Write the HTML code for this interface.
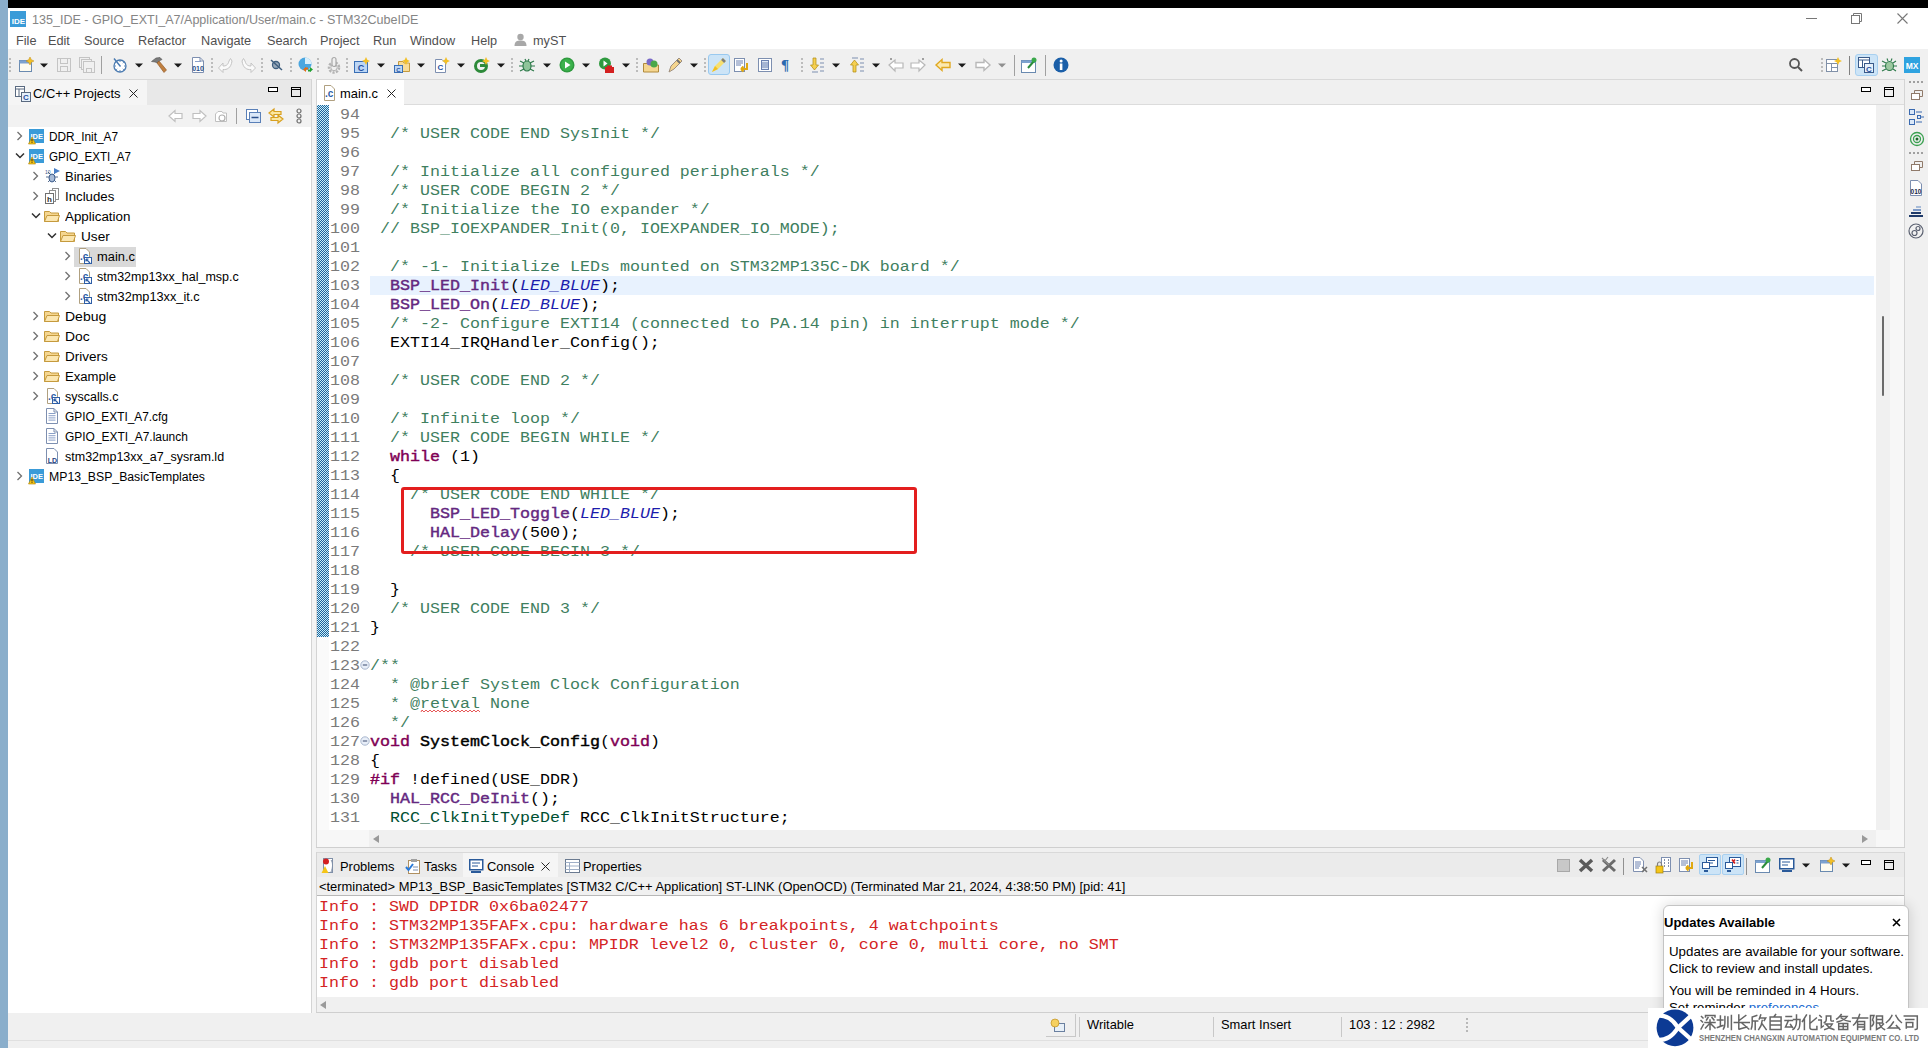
<!DOCTYPE html><html><head><meta charset="utf-8"><style>
*{margin:0;padding:0;box-sizing:border-box}
html,body{width:1928px;height:1048px;overflow:hidden;background:#f0f0f0;font-family:"Liberation Sans",sans-serif;font-size:12.7px;color:#000}
.a{position:absolute}
.t{position:absolute;white-space:pre;line-height:16px}
.ln{position:absolute;width:44px;text-align:right;font-family:"Liberation Mono",monospace;font-size:16.66px;line-height:19px;height:19px;color:#7a7a7a;white-space:pre;transform:scaleY(0.87);transform-origin:0 14px}
.cl{position:absolute;font-family:"Liberation Mono",monospace;font-size:16.66px;line-height:19px;height:19px;color:#000;white-space:pre;transform:scaleY(0.87);transform-origin:0 14px}
.cm{color:#3f7f5f}
.kw{color:#7f0055;-webkit-text-stroke:0.45px #7f0055}
.fn{color:#642880;-webkit-text-stroke:0.45px #642880}
.fb{-webkit-text-stroke:0.45px #000}
.en{color:#1c1cac;font-style:italic}
.ty{color:#005032}
.rd{color:#e01818}
svg{position:absolute;overflow:visible}
</style></head><body><div class="a" style="left:8px;top:0px;width:1920px;height:8px;background:#000"></div><div class="a" style="left:0px;top:0px;width:8px;height:1048px;background:#8aaecb"></div><div class="a" style="left:8px;top:8px;width:1920px;height:41px;background:#fff"></div><div class="a" style="left:8px;top:49px;width:1920px;height:31px;background:#f0f0f0"></div><svg style="left:10px;top:11px;" width="16" height="16" viewBox="0 0 16 16"><rect width="16" height="16" fill="#3a9bd8"/><text x="8.5" y="12.5" font-family="Liberation Sans" font-weight="bold" font-size="8" fill="#fff" text-anchor="middle">IDE</text></svg><div class="t" style="left:32px;top:12px;color:#858585;font-size:12.55px">135_IDE - GPIO_EXTI_A7/Application/User/main.c - STM32CubeIDE</div><div class="a" style="left:1806px;top:18px;width:11px;height:1px;background:#777"></div><svg style="left:1851px;top:13px;" width="12" height="12" viewBox="0 0 12 12"><rect x="0.5" y="2.5" width="8" height="8" fill="none" stroke="#777"/><path d="M2.5 2.5V0.5H10.5V8.5H8.5" fill="none" stroke="#777"/></svg><svg style="left:1897px;top:13px;" width="11" height="11" viewBox="0 0 11 11"><path d="M0.5 0.5L10.5 10.5M10.5 0.5L0.5 10.5" stroke="#777" stroke-width="1.1"/></svg><div class="t" style="left:16px;top:33px;color:#505050">File</div><div class="t" style="left:48px;top:33px;color:#505050">Edit</div><div class="t" style="left:84px;top:33px;color:#505050">Source</div><div class="t" style="left:138px;top:33px;color:#505050">Refactor</div><div class="t" style="left:201px;top:33px;color:#505050">Navigate</div><div class="t" style="left:267px;top:33px;color:#505050">Search</div><div class="t" style="left:320px;top:33px;color:#505050">Project</div><div class="t" style="left:373px;top:33px;color:#505050">Run</div><div class="t" style="left:410px;top:33px;color:#505050">Window</div><div class="t" style="left:471px;top:33px;color:#505050">Help</div><div class="t" style="left:533px;top:33px;color:#505050">myST</div><svg style="left:514px;top:33px;" width="13" height="13" viewBox="0 0 13 13"><circle cx="6.5" cy="4" r="3.2" fill="#a8a8a8"/><path d="M0.5 13C0.5 8.5 3 7.5 6.5 7.5S12.5 8.5 12.5 13Z" fill="#a8a8a8"/></svg><svg style="left:9px;top:58px;" width="2" height="16" viewBox="0 0 2 16"><rect x="0" y="0" width="2" height="2" fill="#bcbcbc"/><rect x="0" y="4" width="2" height="2" fill="#bcbcbc"/><rect x="0" y="8" width="2" height="2" fill="#bcbcbc"/><rect x="0" y="12" width="2" height="2" fill="#bcbcbc"/></svg><svg style="left:18px;top:57px;" width="16" height="16" viewBox="0 0 16 16"><rect x="1.5" y="3.5" width="12" height="11" fill="#fdfbf0" stroke="#6a8ab0"/><rect x="1.5" y="3.5" width="12" height="3" fill="#7da2cf"/><path d="M12 0L13.3 2.7L16 4L13.3 5.3L12 8L10.7 5.3L8 4L10.7 2.7Z" fill="#f2c027" stroke="#c08a10" stroke-width="0.5"/></svg><svg style="left:40px;top:63px;" width="8" height="5" viewBox="0 0 8 5"><path d="M0 0.5H8L4 4.5Z" fill="#1a1a1a"/></svg><svg style="left:56px;top:57px;" width="16" height="16" viewBox="0 0 16 16"><rect x="1.5" y="1.5" width="13" height="13" fill="none" stroke="#c4c4c4"/><rect x="4.5" y="1.5" width="7" height="5" fill="none" stroke="#c4c4c4"/><rect x="4.5" y="9.5" width="7" height="5" fill="none" stroke="#c4c4c4"/></svg><svg style="left:79px;top:57px;" width="16" height="16" viewBox="0 0 16 16"><rect x="0.5" y="0.5" width="10" height="10" fill="none" stroke="#c4c4c4"/><rect x="2.5" y="2.5" width="10" height="10" fill="#f0f0f0" stroke="#c4c4c4"/><rect x="4.5" y="4.5" width="11" height="11" fill="#f0f0f0" stroke="#c4c4c4"/><rect x="7.5" y="11.5" width="5" height="4" fill="none" stroke="#c4c4c4"/></svg><div class="a" style="left:101px;top:56px;width:1px;height:18px;background:#a0a0a0"></div><svg style="left:112px;top:57px;" width="16" height="16" viewBox="0 0 16 16"><circle cx="8" cy="9" r="6" fill="#fff" stroke="#4a7ab0" stroke-width="1.3"/><path d="M2 1.5L8.5 9.5" stroke="#4a7ab0" stroke-width="1.5"/><path d="M8 3.5v1.5M13.5 9h-1.5M8 14.5v-1.5M2.5 9h1.5M11.8 5.2l-1 1M11.8 12.8l-1-1M4.2 12.8l1-1" stroke="#4a7ab0" stroke-width="0.9"/></svg><svg style="left:135px;top:63px;" width="8" height="5" viewBox="0 0 8 5"><path d="M0 0.5H8L4 4.5Z" fill="#1a1a1a"/></svg><svg style="left:151px;top:57px;" width="16" height="16" viewBox="0 0 16 16"><path d="M0.5 4.5L5 1L9 0.5L11 2.5L8 4L6.5 6L4 5Z" fill="#7a7a7a" stroke="#505050" stroke-width="0.6"/><path d="M6 6L8 4L15.5 13L13 15.5Z" fill="#c08040" stroke="#8a5020" stroke-width="0.6"/></svg><svg style="left:174px;top:63px;" width="8" height="5" viewBox="0 0 8 5"><path d="M0 0.5H8L4 4.5Z" fill="#1a1a1a"/></svg><svg style="left:190px;top:57px;" width="16" height="16" viewBox="0 0 16 16"><path d="M2.5 0.5H10L13.5 4V15.5H2.5Z" fill="#fff" stroke="#7d8fb0"/><path d="M10 0.5V4H13.5" fill="none" stroke="#7d8fb0"/></svg><svg style="left:190px;top:57px;" width="16" height="16" viewBox="0 0 16 16"><text x="8" y="14" font-family="Liberation Sans" font-weight="bold" font-size="7" fill="#2a4f8a" text-anchor="middle">010</text><rect x="5" y="4" width="6" height="1" fill="#8aa0c8"/></svg><svg style="left:211px;top:58px;" width="2" height="16" viewBox="0 0 2 16"><rect x="0" y="0" width="2" height="2" fill="#bcbcbc"/><rect x="0" y="4" width="2" height="2" fill="#bcbcbc"/><rect x="0" y="8" width="2" height="2" fill="#bcbcbc"/><rect x="0" y="12" width="2" height="2" fill="#bcbcbc"/></svg><svg style="left:218px;top:57px;" width="16" height="16" viewBox="0 0 16 16"><path d="M5 6L0.5 11L5 15.5V12.5C9 13 13 11 14 4L12.5 1.5L11 4C10 8 8 9 5 9Z" fill="#fafafa" stroke="#c4c4c4" stroke-width="1"/></svg><svg style="left:240px;top:57px;" width="16" height="16" viewBox="0 0 16 16"><path d="M11 6L15.5 11L11 15.5V12.5C7 13 3 11 2 4L3.5 1.5L5 4C6 8 8 9 11 9Z" fill="#fafafa" stroke="#c4c4c4" stroke-width="1"/></svg><svg style="left:261px;top:58px;" width="2" height="16" viewBox="0 0 2 16"><rect x="0" y="0" width="2" height="2" fill="#bcbcbc"/><rect x="0" y="4" width="2" height="2" fill="#bcbcbc"/><rect x="0" y="8" width="2" height="2" fill="#bcbcbc"/><rect x="0" y="12" width="2" height="2" fill="#bcbcbc"/></svg><svg style="left:269px;top:57px;" width="16" height="16" viewBox="0 0 16 16"><circle cx="7" cy="8" r="3.5" fill="#9ab" stroke="#3f5f7f" stroke-width="1.3"/><path d="M2 3L13 13" stroke="#3f5f7f" stroke-width="1.5"/></svg><svg style="left:290px;top:58px;" width="2" height="16" viewBox="0 0 2 16"><rect x="0" y="0" width="2" height="2" fill="#bcbcbc"/><rect x="0" y="4" width="2" height="2" fill="#bcbcbc"/><rect x="0" y="8" width="2" height="2" fill="#bcbcbc"/><rect x="0" y="12" width="2" height="2" fill="#bcbcbc"/></svg><svg style="left:298px;top:57px;" width="16" height="16" viewBox="0 0 16 16"><circle cx="7" cy="7" r="6.5" fill="#4aa6e0"/><path d="M7 0.5A6.5 6.5 0 0 1 13.5 7L7 7Z" fill="#d8eefa"/><path d="M5 12.5L8 10V15Z" fill="#e86a10"/><path d="M7 11.5H10" stroke="#e86a10" stroke-width="2"/><path d="M15 12.5L12 10V15Z" fill="#20a030"/><path d="M10 13.5H13" stroke="#20a030" stroke-width="2"/></svg><svg style="left:317px;top:58px;" width="2" height="16" viewBox="0 0 2 16"><rect x="0" y="0" width="2" height="2" fill="#bcbcbc"/><rect x="0" y="4" width="2" height="2" fill="#bcbcbc"/><rect x="0" y="8" width="2" height="2" fill="#bcbcbc"/><rect x="0" y="12" width="2" height="2" fill="#bcbcbc"/></svg><svg style="left:326px;top:57px;" width="16" height="16" viewBox="0 0 16 16"><circle cx="8" cy="10.5" r="5" fill="none" stroke="#b4b4b4" stroke-width="2.5" stroke-dasharray="2.2 1.3"/><circle cx="8" cy="10.5" r="3.2" fill="#f0f0f0" stroke="#b4b4b4" stroke-width="1"/><rect x="6" y="0.5" width="4" height="9" rx="2" fill="#f0f0f0" stroke="#a8a8a8" stroke-width="1.2"/></svg><svg style="left:346px;top:58px;" width="2" height="16" viewBox="0 0 2 16"><rect x="0" y="0" width="2" height="2" fill="#bcbcbc"/><rect x="0" y="4" width="2" height="2" fill="#bcbcbc"/><rect x="0" y="8" width="2" height="2" fill="#bcbcbc"/><rect x="0" y="12" width="2" height="2" fill="#bcbcbc"/></svg><svg style="left:354px;top:57px;" width="16" height="16" viewBox="0 0 16 16"><rect x="0.5" y="4.5" width="13" height="11" fill="#bcd6f5" stroke="#3a6fb5"/><text x="7" y="14" font-family="Liberation Sans" font-weight="bold" font-size="9" fill="#1f4f9f" text-anchor="middle">C</text><path d="M12 0L13.3 2.7L16 4L13.3 5.3L12 8L10.7 5.3L8 4L10.7 2.7Z" fill="#f2c027"/></svg><svg style="left:377px;top:63px;" width="8" height="5" viewBox="0 0 8 5"><path d="M0 0.5H8L4 4.5Z" fill="#1a1a1a"/></svg><svg style="left:394px;top:57px;" width="16" height="16" viewBox="0 0 16 16"><path d="M4.5 4.5H9L10 6H15.5V14.5H4.5Z" fill="#f8dc98" stroke="#c59a3d"/><rect x="0.5" y="8.5" width="8" height="7" fill="#bcd6f5" stroke="#3a6fb5"/><text x="4.5" y="14.5" font-family="Liberation Sans" font-weight="bold" font-size="6" fill="#1f4f9f" text-anchor="middle">C</text><path d="M12 0L13.3 2.7L16 4L13.3 5.3L12 8L10.7 5.3L8 4L10.7 2.7Z" fill="#f2c027"/></svg><svg style="left:417px;top:63px;" width="8" height="5" viewBox="0 0 8 5"><path d="M0 0.5H8L4 4.5Z" fill="#1a1a1a"/></svg><svg style="left:434px;top:57px;" width="16" height="16" viewBox="0 0 16 16"><path d="M1.5 2.5H8L11.5 6V15.5H1.5Z" fill="#fff" stroke="#7d8fb0"/><text x="6.5" y="13" font-family="Liberation Sans" font-weight="bold" font-size="8" fill="#1f4f9f" text-anchor="middle">C</text><path d="M12 0L13.3 2.7L16 4L13.3 5.3L12 8L10.7 5.3L8 4L10.7 2.7Z" fill="#f2c027"/></svg><svg style="left:457px;top:63px;" width="8" height="5" viewBox="0 0 8 5"><path d="M0 0.5H8L4 4.5Z" fill="#1a1a1a"/></svg><svg style="left:474px;top:57px;" width="16" height="16" viewBox="0 0 16 16"><circle cx="7" cy="9" r="5.5" fill="none" stroke="#2d8a3a" stroke-width="3"/><rect x="6" y="7" width="5" height="3" fill="#2d8a3a"/><path d="M12 0L13.3 2.7L16 4L13.3 5.3L12 8L10.7 5.3L8 4L10.7 2.7Z" fill="#f2c027"/></svg><svg style="left:497px;top:63px;" width="8" height="5" viewBox="0 0 8 5"><path d="M0 0.5H8L4 4.5Z" fill="#1a1a1a"/></svg><svg style="left:511px;top:58px;" width="2" height="16" viewBox="0 0 2 16"><rect x="0" y="0" width="2" height="2" fill="#bcbcbc"/><rect x="0" y="4" width="2" height="2" fill="#bcbcbc"/><rect x="0" y="8" width="2" height="2" fill="#bcbcbc"/><rect x="0" y="12" width="2" height="2" fill="#bcbcbc"/></svg><svg style="left:519px;top:57px;" width="16" height="16" viewBox="0 0 16 16"><ellipse cx="8" cy="9" rx="4" ry="5" fill="#8fc49a" stroke="#2d7a4a" stroke-width="1.2"/><path d="M1 4L5 6M15 4L11 6M0 9H4M16 9H12M1 14L5 12M15 14L11 12M6 2L7 4M10 2L9 4" stroke="#2d7a4a" stroke-width="1.2"/></svg><svg style="left:543px;top:63px;" width="8" height="5" viewBox="0 0 8 5"><path d="M0 0.5H8L4 4.5Z" fill="#1a1a1a"/></svg><svg style="left:559px;top:57px;" width="16" height="16" viewBox="0 0 16 16"><circle cx="8" cy="8" r="7.5" fill="#2f9a3f"/><circle cx="8" cy="8" r="6" fill="#3cb24c"/><path d="M6 4.5L11.5 8L6 11.5Z" fill="#fff"/></svg><svg style="left:582px;top:63px;" width="8" height="5" viewBox="0 0 8 5"><path d="M0 0.5H8L4 4.5Z" fill="#1a1a1a"/></svg><svg style="left:598px;top:57px;" width="16" height="16" viewBox="0 0 16 16"><circle cx="7" cy="6.5" r="6" fill="#2f9a3f"/><path d="M5.5 3.5L9.5 6.5L5.5 9.5Z" fill="#fff"/><rect x="7" y="10" width="9" height="6" fill="#d42020"/><rect x="9" y="8.5" width="5" height="2" fill="#d42020"/></svg><svg style="left:622px;top:63px;" width="8" height="5" viewBox="0 0 8 5"><path d="M0 0.5H8L4 4.5Z" fill="#1a1a1a"/></svg><svg style="left:636px;top:58px;" width="2" height="16" viewBox="0 0 2 16"><rect x="0" y="0" width="2" height="2" fill="#bcbcbc"/><rect x="0" y="4" width="2" height="2" fill="#bcbcbc"/><rect x="0" y="8" width="2" height="2" fill="#bcbcbc"/><rect x="0" y="12" width="2" height="2" fill="#bcbcbc"/></svg><svg style="left:643px;top:57px;" width="16" height="16" viewBox="0 0 16 16"><path d="M0.5 6.5H6L7 8H15.5V15H0.5Z" fill="#f5d690" stroke="#b08a3d"/><circle cx="7" cy="5" r="3.5" fill="#7a6ac8"/><circle cx="11" cy="7" r="3.5" fill="#4aa84a"/></svg><svg style="left:667px;top:57px;" width="16" height="16" viewBox="0 0 16 16"><path d="M2 15L4 9L12 1L15 4L7 12Z" fill="#f5d690" stroke="#a09080"/><path d="M10 3L13 6" stroke="#707070" stroke-width="2"/></svg><svg style="left:690px;top:63px;" width="8" height="5" viewBox="0 0 8 5"><path d="M0 0.5H8L4 4.5Z" fill="#1a1a1a"/></svg><svg style="left:704px;top:58px;" width="2" height="16" viewBox="0 0 2 16"><rect x="0" y="0" width="2" height="2" fill="#bcbcbc"/><rect x="0" y="4" width="2" height="2" fill="#bcbcbc"/><rect x="0" y="8" width="2" height="2" fill="#bcbcbc"/><rect x="0" y="12" width="2" height="2" fill="#bcbcbc"/></svg><div class="a" style="left:708px;top:54px;width:22px;height:21px;background:#cce4f7;border:1px solid #99c9ef;border-radius:3px"></div><svg style="left:711px;top:57px;" width="16" height="16" viewBox="0 0 16 16"><path d="M1 15L4 9L12 1L15 4L7 12Z" fill="#f7e070"/><path d="M4 9L7 12L1 15Z" fill="#f2c020"/><path d="M11 2L14 5" stroke="#808080" stroke-width="2.5"/></svg><svg style="left:734px;top:57px;" width="16" height="16" viewBox="0 0 16 16"><rect x="0.5" y="1.5" width="10" height="13" fill="#fff" stroke="#7d8fb0"/><path d="M2 4h7M2 6h7M2 8h5" stroke="#6a80b0"/><path d="M13 6V12H7M7 12L9.5 9.5M7 12L9.5 14.5" stroke="#e0a810" stroke-width="2" fill="none"/></svg><svg style="left:757px;top:57px;" width="16" height="16" viewBox="0 0 16 16"><rect x="1.5" y="1.5" width="13" height="13" fill="#fff" stroke="#7d8fb0"/><rect x="4.5" y="3.5" width="7" height="9" fill="#dfe8f5" stroke="#6a80b0"/><path d="M5 6h6M5 8h6M5 10h6" stroke="#6a80b0"/></svg><div class="t" style="left:781px;top:57px;font-family:Liberation Serif;font-weight:bold;font-size:15px;color:#2a6ab0;line-height:16px">¶</div><svg style="left:801px;top:58px;" width="2" height="16" viewBox="0 0 2 16"><rect x="0" y="0" width="2" height="2" fill="#bcbcbc"/><rect x="0" y="4" width="2" height="2" fill="#bcbcbc"/><rect x="0" y="8" width="2" height="2" fill="#bcbcbc"/><rect x="0" y="12" width="2" height="2" fill="#bcbcbc"/></svg><svg style="left:809px;top:57px;" width="16" height="16" viewBox="0 0 16 16"><path d="M4 1V8H1.5L5.5 13L9.5 8H7V1Z" fill="#f5cf50" stroke="#b08a10" stroke-width="0.7"/><path d="M11 2h4M11 6h4M11 10h4M11 14h4M3 15h6" stroke="#7d8fb0"/></svg><svg style="left:832px;top:63px;" width="8" height="5" viewBox="0 0 8 5"><path d="M0 0.5H8L4 4.5Z" fill="#1a1a1a"/></svg><svg style="left:849px;top:57px;" width="16" height="16" viewBox="0 0 16 16"><path d="M4 15V8H1.5L5.5 3L9.5 8H7V15Z" fill="#f5cf50" stroke="#b08a10" stroke-width="0.7"/><path d="M11 2h4M11 6h4M11 10h4M11 14h4M3 1h6" stroke="#7d8fb0"/></svg><svg style="left:872px;top:63px;" width="8" height="5" viewBox="0 0 8 5"><path d="M0 0.5H8L4 4.5Z" fill="#1a1a1a"/></svg><svg style="left:888px;top:57px;" width="16" height="16" viewBox="0 0 16 16"><path d="M1 8L7 3V6H15V11H7V14Z" fill="#fff" stroke="#b8b8b8" stroke-width="1.2"/><path d="M2 1L4 3M4 1L2 3" stroke="#a0a0a0"/></svg><svg style="left:910px;top:57px;" width="16" height="16" viewBox="0 0 16 16"><path d="M15 8L9 3V6H1V11H9V14Z" fill="#fff" stroke="#b8b8b8" stroke-width="1.2"/><path d="M12 1L14 3M14 1L12 3" stroke="#a0a0a0"/></svg><svg style="left:935px;top:57px;" width="16" height="16" viewBox="0 0 16 16"><path d="M1 8L7 2.5V5.5H15V10.5H7V13.5Z" fill="#fbe9b0" stroke="#e0a820" stroke-width="1.4"/></svg><svg style="left:958px;top:63px;" width="8" height="5" viewBox="0 0 8 5"><path d="M0 0.5H8L4 4.5Z" fill="#1a1a1a"/></svg><svg style="left:975px;top:57px;" width="16" height="16" viewBox="0 0 16 16"><path d="M15 8L9 2.5V5.5H1V10.5H9V13.5Z" fill="#fff" stroke="#b8b8b8" stroke-width="1.4"/></svg><svg style="left:998px;top:63px;" width="8" height="5" viewBox="0 0 8 5"><path d="M0 0.5H8L4 4.5Z" fill="#909090"/></svg><div class="a" style="left:1014px;top:55px;width:1px;height:21px;background:#a0a0a0"></div><svg style="left:1021px;top:57px;" width="16" height="16" viewBox="0 0 16 16"><rect x="0.5" y="3.5" width="14" height="12" fill="#fff" stroke="#6a8ab0"/><rect x="0.5" y="3.5" width="14" height="2.5" fill="#7da2cf"/><path d="M7 11L13 4" stroke="#2a8a3a" stroke-width="2"/><circle cx="13" cy="3" r="2.5" fill="#3aa84a"/></svg><div class="a" style="left:1045px;top:55px;width:1px;height:21px;background:#a0a0a0"></div><svg style="left:1053px;top:57px;" width="16" height="16" viewBox="0 0 16 16"><circle cx="8" cy="8" r="7.5" fill="#1b5fa8"/><rect x="6.8" y="6.5" width="2.6" height="6.5" fill="#fff"/><circle cx="8.1" cy="4" r="1.5" fill="#fff"/></svg><svg style="left:1789px;top:58px;" width="14" height="14" viewBox="0 0 14 14"><circle cx="5.5" cy="5.5" r="4.5" fill="none" stroke="#555" stroke-width="1.8"/><path d="M9 9L13 13" stroke="#555" stroke-width="2"/></svg><svg style="left:1821px;top:58px;" width="2" height="16" viewBox="0 0 2 16"><rect x="0" y="0" width="2" height="2" fill="#bcbcbc"/><rect x="0" y="4" width="2" height="2" fill="#bcbcbc"/><rect x="0" y="8" width="2" height="2" fill="#bcbcbc"/><rect x="0" y="12" width="2" height="2" fill="#bcbcbc"/></svg><svg style="left:1826px;top:57px;" width="16" height="16" viewBox="0 0 16 16"><rect x="0.5" y="2.5" width="11" height="12" fill="#fff" stroke="#8090a8"/><path d="M0.5 6.5H11.5M5.5 6.5V14.5M5.5 10.5H11.5" stroke="#8090a8"/><path d="M12 0L13.3 2.7L16 4L13.3 5.3L12 8L10.7 5.3L8 4L10.7 2.7Z" fill="#f2c027"/></svg><div class="a" style="left:1849px;top:56px;width:1px;height:19px;background:#808080"></div><div class="a" style="left:1855px;top:54px;width:23px;height:22px;background:#cce4f7;border:1px solid #a8d0f0;border-radius:3px"></div><svg style="left:1858px;top:57px;" width="16" height="16" viewBox="0 0 16 16"><rect x="0.5" y="0.5" width="11" height="10" fill="#fff" stroke="#3a5a8a"/><path d="M0.5 3H11.5M4.5 3V10.5" stroke="#3a5a8a"/><rect x="6.5" y="6.5" width="9" height="9" fill="#e6f0fa" stroke="#3a5a8a"/><text x="11" y="14.5" font-family="Liberation Sans" font-weight="bold" font-size="8" fill="#1f4f9f" text-anchor="middle">C</text></svg><svg style="left:1881px;top:57px;" width="16" height="16" viewBox="0 0 16 16"><ellipse cx="8.5" cy="9" rx="4" ry="4.5" fill="#9cc8a0" stroke="#2d7a4a" stroke-width="1.1"/><path d="M1 4L5 6M15 4L12 6M1 9H4.5M16 9H12.5M1 14L5 12M15 14L12 12M6 1.5L7 4M11 1.5L10 4" stroke="#2d7a4a" stroke-width="1.1"/></svg><svg style="left:1904px;top:57px;" width="16" height="16" viewBox="0 0 16 16"><rect width="16" height="16" fill="#2fa3e0"/><text x="8" y="12" font-family="Liberation Sans" font-weight="bold" font-size="8.5" fill="#fff" text-anchor="middle">MX</text></svg><div class="a" style="left:8px;top:79px;width:304px;height:935px;background:#fff"></div><div class="a" style="left:8px;top:79px;width:304px;height:1px;background:#d9d9d9"></div><div class="a" style="left:311px;top:79px;width:1px;height:935px;background:#d4d4d4"></div><div class="a" style="left:312px;top:79px;width:4px;height:935px;background:#f3f3f3"></div><div class="a" style="left:8px;top:1013px;width:304px;height:1px;background:#c8c8c8"></div><div class="a" style="left:8px;top:80px;width:303px;height:25px;background:#e8e8e8"></div><div class="a" style="left:8px;top:80px;width:139px;height:25px;background:#f5f5f5"></div><svg style="left:15px;top:86px;" width="16" height="16" viewBox="0 0 16 16"><rect x="0.5" y="0.5" width="9" height="10" fill="#fff" stroke="#5a6a80"/><path d="M0.5 3H9.5M4 3V10.5" stroke="#5a6a80"/><rect x="6.5" y="6.5" width="9" height="9" fill="#e6f0fa" stroke="#5a6a80"/><text x="11" y="14.3" font-family="Liberation Sans" font-weight="bold" font-size="8" fill="#1f4f9f" text-anchor="middle">C</text></svg><div class="t" style="left:33px;top:86px;font-size:12.9px">C/C++ Projects</div><svg style="left:129px;top:89px;" width="9" height="9" viewBox="0 0 9 9"><path d="M0.5 0.5L8.5 8.5M8.5 0.5L0.5 8.5" stroke="#1a1a1a" stroke-width="0.95"/></svg><div class="a" style="left:268px;top:87px;width:10px;height:5px;border:1.3px solid #000;background:#fff"></div><div class="a" style="left:291px;top:87px;width:10px;height:10px;border:1.3px solid #000"></div><div class="a" style="left:291px;top:89px;width:10px;height:1px;background:#000"></div><div class="a" style="left:8px;top:105px;width:303px;height:22px;background:#f2f2f2"></div><svg style="left:168px;top:109px;" width="16" height="14" viewBox="0 0 16 14"><path d="M1 7L7 1.5V4.5H14V9.5H7V12.5Z" fill="#fff" stroke="#c0c0c0" stroke-width="1.2"/></svg><svg style="left:191px;top:109px;" width="16" height="14" viewBox="0 0 16 14"><path d="M15 7L9 1.5V4.5H2V9.5H9V12.5Z" fill="#fff" stroke="#c0c0c0" stroke-width="1.2"/></svg><svg style="left:214px;top:109px;" width="14" height="14" viewBox="0 0 14 14"><path d="M1.5 12.5V5L4 2.5H8L9 4H12.5V12.5Z" fill="#fff" stroke="#c0c0c0"/><circle cx="8" cy="9" r="3" fill="none" stroke="#b0b0b0" stroke-width="1.2"/></svg><div class="a" style="left:236px;top:108px;width:1px;height:16px;background:#a0a0a0"></div><svg style="left:246px;top:109px;" width="16" height="14" viewBox="0 0 16 14"><rect x="0.5" y="0.5" width="11" height="10" fill="#fff" stroke="#5a80b8"/><rect x="3.5" y="3.5" width="11" height="10" fill="#dbe8f8" stroke="#5a80b8"/><path d="M5.5 8.5H12.5" stroke="#2a4f8a" stroke-width="1.5"/></svg><svg style="left:268px;top:108px;" width="16" height="16" viewBox="0 0 16 16"><path d="M1 5L6 1V3.5H13V6.5H6V9Z" fill="#fbe6a0" stroke="#d8a020" stroke-width="1.2"/><path d="M15 11L10 7V9.5H3V12.5H10V15Z" fill="#fbe6a0" stroke="#d8a020" stroke-width="1.2"/></svg><svg style="left:295px;top:108px;" width="8" height="16" viewBox="0 0 8 16"><circle cx="4" cy="3" r="2" fill="none" stroke="#707070" stroke-width="1.2"/><circle cx="4" cy="8" r="2" fill="none" stroke="#707070" stroke-width="1.2"/><circle cx="4" cy="13" r="2" fill="none" stroke="#707070" stroke-width="1.2"/></svg><svg style="left:16px;top:131px;" width="8" height="10" viewBox="0 0 8 10"><path d="M1.5 1L5.5 5L1.5 9" fill="none" stroke="#707070" stroke-width="1.3"/></svg><svg style="left:28px;top:128px;" width="16" height="16" viewBox="0 0 16 16"><rect x="1" y="1" width="15" height="14" fill="#3a9bd8"/><text x="8.8" y="11" font-family="Liberation Sans" font-weight="bold" font-size="7.5" fill="#fff" text-anchor="middle">IDE</text><path d="M4 9L7.5 16H0.5Z" fill="#f5c518" stroke="#b08000" stroke-width="0.6"/><rect x="3.6" y="11" width="0.8" height="2.5" fill="#000"/><rect x="3.6" y="14" width="0.8" height="0.8" fill="#000"/></svg><div class="t" style="left:49px;top:129px;font-size:12.5px;transform:scaleX(0.946);transform-origin:0 0">DDR_Init_A7</div><svg style="left:15px;top:152px;" width="10" height="8" viewBox="0 0 10 8"><path d="M1 1.5L5 5.5L9 1.5" fill="none" stroke="#303030" stroke-width="1.5"/></svg><svg style="left:28px;top:148px;" width="16" height="16" viewBox="0 0 16 16"><rect x="1" y="1" width="15" height="14" fill="#3a9bd8"/><text x="8.8" y="11" font-family="Liberation Sans" font-weight="bold" font-size="7.5" fill="#fff" text-anchor="middle">IDE</text><path d="M4 9L7.5 16H0.5Z" fill="#f5c518" stroke="#b08000" stroke-width="0.6"/><rect x="3.6" y="11" width="0.8" height="2.5" fill="#000"/><rect x="3.6" y="14" width="0.8" height="0.8" fill="#000"/></svg><div class="t" style="left:49px;top:149px;font-size:12.5px;transform:scaleX(0.928);transform-origin:0 0">GPIO_EXTI_A7</div><svg style="left:32px;top:171px;" width="8" height="10" viewBox="0 0 8 10"><path d="M1.5 1L5.5 5L1.5 9" fill="none" stroke="#707070" stroke-width="1.3"/></svg><svg style="left:44px;top:168px;" width="16" height="16" viewBox="0 0 16 16"><path d="M4 4L7 7M12 4L9 7M2 9H5M11 9H14M4 14L6 12M12 14L10 12" stroke="#5a7090"/><ellipse cx="8" cy="10" rx="3" ry="4" fill="#a8bcd8" stroke="#3a5a8a"/><path d="M10 0L16 3L10 6Z" fill="#4a80c8"/><text x="1" y="6" font-size="5" fill="#3a5a8a" font-family="Liberation Sans">10</text></svg><div class="t" style="left:65px;top:169px;font-size:12.5px;transform:scaleX(1.04);transform-origin:0 0">Binaries</div><svg style="left:32px;top:191px;" width="8" height="10" viewBox="0 0 8 10"><path d="M1.5 1L5.5 5L1.5 9" fill="none" stroke="#707070" stroke-width="1.3"/></svg><svg style="left:44px;top:188px;" width="16" height="16" viewBox="0 0 16 16"><rect x="8.5" y="0.5" width="6" height="11" fill="#fff" stroke="#909090"/><rect x="5.5" y="2.5" width="6" height="11" fill="#fff" stroke="#909090"/><rect x="1.5" y="5.5" width="8" height="10" fill="#fff" stroke="#707070"/><text x="5.5" y="14" font-family="Liberation Sans" font-weight="bold" font-size="8" fill="#303030" text-anchor="middle">h</text></svg><div class="t" style="left:65px;top:189px;font-size:12.5px;transform:scaleX(1.06);transform-origin:0 0">Includes</div><svg style="left:31px;top:212px;" width="10" height="8" viewBox="0 0 10 8"><path d="M1 1.5L5 5.5L9 1.5" fill="none" stroke="#303030" stroke-width="1.5"/></svg><svg style="left:44px;top:208px;" width="16" height="16" viewBox="0 0 16 16"><path d="M0.5 3.5H5.5L7 5H14.5V13.5H0.5Z" fill="#f5d690" stroke="#c59a3d"/><path d="M0.5 13.5L3 7.5H15.5L13.5 13.5Z" fill="#fbe6b0" stroke="#c59a3d"/></svg><div class="t" style="left:65px;top:209px;font-size:12.5px;transform:scaleX(1.07);transform-origin:0 0">Application</div><svg style="left:47px;top:232px;" width="10" height="8" viewBox="0 0 10 8"><path d="M1 1.5L5 5.5L9 1.5" fill="none" stroke="#303030" stroke-width="1.5"/></svg><svg style="left:60px;top:228px;" width="16" height="16" viewBox="0 0 16 16"><path d="M0.5 3.5H5.5L7 5H14.5V13.5H0.5Z" fill="#f5d690" stroke="#c59a3d"/><path d="M0.5 13.5L3 7.5H15.5L13.5 13.5Z" fill="#fbe6b0" stroke="#c59a3d"/></svg><div class="t" style="left:81px;top:229px;font-size:12.5px;transform:scaleX(1.09);transform-origin:0 0">User</div><div class="a" style="left:74px;top:247px;width:62px;height:20px;background:#d9d9d9"></div><svg style="left:64px;top:251px;" width="8" height="10" viewBox="0 0 8 10"><path d="M1.5 1L5.5 5L1.5 9" fill="none" stroke="#707070" stroke-width="1.3"/></svg><svg style="left:76px;top:248px;" width="16" height="16" viewBox="0 0 16 16"><path d="M3.5 0.5H10L13.5 4V15.5H3.5Z" fill="#fff" stroke="#b0a080"/><text x="4" y="12" font-family="Liberation Sans" font-weight="bold" font-size="10" fill="#2f5fa7">.c</text><rect x="8.5" y="9.5" width="7" height="6" fill="#fff" stroke="#2f5fa7"/><path d="M10 11L14 15M10 11V13.5M10 11H12.5" stroke="#2f5fa7" stroke-width="1.2"/></svg><div class="t" style="left:97px;top:249px;font-size:12.5px;transform:scaleX(1.03);transform-origin:0 0">main.c</div><svg style="left:64px;top:271px;" width="8" height="10" viewBox="0 0 8 10"><path d="M1.5 1L5.5 5L1.5 9" fill="none" stroke="#707070" stroke-width="1.3"/></svg><svg style="left:76px;top:268px;" width="16" height="16" viewBox="0 0 16 16"><path d="M3.5 0.5H10L13.5 4V15.5H3.5Z" fill="#fff" stroke="#b0a080"/><text x="4" y="12" font-family="Liberation Sans" font-weight="bold" font-size="10" fill="#2f5fa7">.c</text><rect x="8.5" y="9.5" width="7" height="6" fill="#fff" stroke="#2f5fa7"/><path d="M10 11L14 15M10 11V13.5M10 11H12.5" stroke="#2f5fa7" stroke-width="1.2"/></svg><div class="t" style="left:97px;top:269px;font-size:12.5px;transform:scaleX(1.0);transform-origin:0 0">stm32mp13xx_hal_msp.c</div><svg style="left:64px;top:291px;" width="8" height="10" viewBox="0 0 8 10"><path d="M1.5 1L5.5 5L1.5 9" fill="none" stroke="#707070" stroke-width="1.3"/></svg><svg style="left:76px;top:288px;" width="16" height="16" viewBox="0 0 16 16"><path d="M3.5 0.5H10L13.5 4V15.5H3.5Z" fill="#fff" stroke="#b0a080"/><text x="4" y="12" font-family="Liberation Sans" font-weight="bold" font-size="10" fill="#2f5fa7">.c</text><rect x="8.5" y="9.5" width="7" height="6" fill="#fff" stroke="#2f5fa7"/><path d="M10 11L14 15M10 11V13.5M10 11H12.5" stroke="#2f5fa7" stroke-width="1.2"/></svg><div class="t" style="left:97px;top:289px;font-size:12.5px;transform:scaleX(1.02);transform-origin:0 0">stm32mp13xx_it.c</div><svg style="left:32px;top:311px;" width="8" height="10" viewBox="0 0 8 10"><path d="M1.5 1L5.5 5L1.5 9" fill="none" stroke="#707070" stroke-width="1.3"/></svg><svg style="left:44px;top:308px;" width="16" height="16" viewBox="0 0 16 16"><path d="M0.5 3.5H5.5L7 5H14.5V13.5H0.5Z" fill="#f5d690" stroke="#c59a3d"/><path d="M0.5 13.5L3 7.5H15.5L13.5 13.5Z" fill="#fbe6b0" stroke="#c59a3d"/></svg><div class="t" style="left:65px;top:309px;font-size:12.5px;transform:scaleX(1.12);transform-origin:0 0">Debug</div><svg style="left:32px;top:331px;" width="8" height="10" viewBox="0 0 8 10"><path d="M1.5 1L5.5 5L1.5 9" fill="none" stroke="#707070" stroke-width="1.3"/></svg><svg style="left:44px;top:328px;" width="16" height="16" viewBox="0 0 16 16"><path d="M0.5 3.5H5.5L7 5H14.5V13.5H0.5Z" fill="#f5d690" stroke="#c59a3d"/><path d="M0.5 13.5L3 7.5H15.5L13.5 13.5Z" fill="#fbe6b0" stroke="#c59a3d"/></svg><div class="t" style="left:65px;top:329px;font-size:12.5px;transform:scaleX(1.11);transform-origin:0 0">Doc</div><svg style="left:32px;top:351px;" width="8" height="10" viewBox="0 0 8 10"><path d="M1.5 1L5.5 5L1.5 9" fill="none" stroke="#707070" stroke-width="1.3"/></svg><svg style="left:44px;top:348px;" width="16" height="16" viewBox="0 0 16 16"><path d="M0.5 3.5H5.5L7 5H14.5V13.5H0.5Z" fill="#f5d690" stroke="#c59a3d"/><path d="M0.5 13.5L3 7.5H15.5L13.5 13.5Z" fill="#fbe6b0" stroke="#c59a3d"/></svg><div class="t" style="left:65px;top:349px;font-size:12.5px;transform:scaleX(1.08);transform-origin:0 0">Drivers</div><svg style="left:32px;top:371px;" width="8" height="10" viewBox="0 0 8 10"><path d="M1.5 1L5.5 5L1.5 9" fill="none" stroke="#707070" stroke-width="1.3"/></svg><svg style="left:44px;top:368px;" width="16" height="16" viewBox="0 0 16 16"><path d="M0.5 3.5H5.5L7 5H14.5V13.5H0.5Z" fill="#f5d690" stroke="#c59a3d"/><path d="M0.5 13.5L3 7.5H15.5L13.5 13.5Z" fill="#fbe6b0" stroke="#c59a3d"/></svg><div class="t" style="left:65px;top:369px;font-size:12.5px;transform:scaleX(1.05);transform-origin:0 0">Example</div><svg style="left:32px;top:391px;" width="8" height="10" viewBox="0 0 8 10"><path d="M1.5 1L5.5 5L1.5 9" fill="none" stroke="#707070" stroke-width="1.3"/></svg><svg style="left:44px;top:388px;" width="16" height="16" viewBox="0 0 16 16"><path d="M3.5 0.5H10L13.5 4V15.5H3.5Z" fill="#fff" stroke="#b0a080"/><text x="4" y="12" font-family="Liberation Sans" font-weight="bold" font-size="10" fill="#2f5fa7">.c</text><rect x="8.5" y="9.5" width="7" height="6" fill="#fff" stroke="#2f5fa7"/><path d="M10 11L14 15M10 11V13.5M10 11H12.5" stroke="#2f5fa7" stroke-width="1.2"/></svg><div class="t" style="left:65px;top:389px;font-size:12.5px;transform:scaleX(1.0);transform-origin:0 0">syscalls.c</div><svg style="left:44px;top:408px;" width="16" height="16" viewBox="0 0 16 16"><path d="M2.5 0.5H10L13.5 4V15.5H2.5Z" fill="#fff" stroke="#7d8fb0"/><path d="M10 0.5V4H13.5" fill="none" stroke="#7d8fb0"/><rect x="4.5" y="5.0" width="7" height="1" fill="#8aa0c8"/><rect x="4.5" y="7.2" width="7" height="1" fill="#8aa0c8"/><rect x="4.5" y="9.4" width="7" height="1" fill="#8aa0c8"/><rect x="4.5" y="11.6" width="7" height="1" fill="#8aa0c8"/></svg><div class="t" style="left:65px;top:409px;font-size:12.5px;transform:scaleX(0.95);transform-origin:0 0">GPIO_EXTI_A7.cfg</div><svg style="left:44px;top:428px;" width="16" height="16" viewBox="0 0 16 16"><path d="M2.5 0.5H10L13.5 4V15.5H2.5Z" fill="#fff" stroke="#7d8fb0"/><path d="M10 0.5V4H13.5" fill="none" stroke="#7d8fb0"/><rect x="4.5" y="5.0" width="7" height="1" fill="#8aa0c8"/><rect x="4.5" y="7.2" width="7" height="1" fill="#8aa0c8"/><rect x="4.5" y="9.4" width="7" height="1" fill="#8aa0c8"/><rect x="4.5" y="11.6" width="7" height="1" fill="#8aa0c8"/></svg><div class="t" style="left:65px;top:429px;font-size:12.5px;transform:scaleX(0.956);transform-origin:0 0">GPIO_EXTI_A7.launch</div><svg style="left:44px;top:448px;" width="16" height="16" viewBox="0 0 16 16"><path d="M2.5 0.5H10L13.5 4V15.5H2.5Z" fill="#fff" stroke="#7d8fb0"/><text x="8.5" y="14.5" font-family="Liberation Sans" font-weight="bold" font-size="7" fill="#1f3f7f" text-anchor="middle">LD</text></svg><div class="t" style="left:65px;top:449px;font-size:12.5px;transform:scaleX(1.0);transform-origin:0 0">stm32mp13xx_a7_sysram.ld</div><svg style="left:16px;top:471px;" width="8" height="10" viewBox="0 0 8 10"><path d="M1.5 1L5.5 5L1.5 9" fill="none" stroke="#707070" stroke-width="1.3"/></svg><svg style="left:28px;top:468px;" width="16" height="16" viewBox="0 0 16 16"><rect x="1" y="1" width="15" height="14" fill="#3a9bd8"/><text x="8.8" y="11" font-family="Liberation Sans" font-weight="bold" font-size="7.5" fill="#fff" text-anchor="middle">IDE</text><path d="M4 9L7.5 16H0.5Z" fill="#f5c518" stroke="#b08000" stroke-width="0.6"/><rect x="3.6" y="11" width="0.8" height="2.5" fill="#000"/><rect x="3.6" y="14" width="0.8" height="0.8" fill="#000"/></svg><div class="t" style="left:49px;top:469px;font-size:12.5px;transform:scaleX(0.98);transform-origin:0 0">MP13_BSP_BasicTemplates</div><div class="a" style="left:316px;top:79px;width:1589px;height:769px;background:#fff"></div><div class="a" style="left:316px;top:79px;width:1589px;height:1px;background:#d9d9d9"></div><div class="a" style="left:316px;top:79px;width:1px;height:769px;background:#d4d4d4"></div><div class="a" style="left:1904px;top:79px;width:1px;height:769px;background:#d4d4d4"></div><div class="a" style="left:316px;top:847px;width:1589px;height:1px;background:#cfcfcf"></div><div class="a" style="left:317px;top:80px;width:1587px;height:25px;background:#f0f0f0"></div><div class="a" style="left:317px;top:104px;width:1587px;height:1px;background:#dcdcdc"></div><div class="a" style="left:317px;top:80px;width:87px;height:25px;background:#fff"></div><svg style="left:321px;top:85px;" width="16" height="16" viewBox="0 0 16 16"><path d="M3.5 0.5H10L13.5 4V15.5H3.5Z" fill="#fff" stroke="#b0a080"/><text x="4" y="12" font-family="Liberation Sans" font-weight="bold" font-size="10" fill="#2f5fa7">.c</text></svg><div class="t" style="left:340px;top:86px;font-size:12.9px">main.c</div><svg style="left:387px;top:89px;" width="9" height="9" viewBox="0 0 9 9"><path d="M0.5 0.5L8.5 8.5M8.5 0.5L0.5 8.5" stroke="#1a1a1a" stroke-width="0.95"/></svg><div class="a" style="left:1861px;top:87px;width:10px;height:5px;border:1.3px solid #000;background:#fff"></div><div class="a" style="left:1884px;top:87px;width:10px;height:10px;border:1.3px solid #000"></div><div class="a" style="left:1884px;top:89px;width:10px;height:1px;background:#000"></div><svg style="left:317px;top:105px" width="12" height="532"><defs><pattern id="hp" width="2" height="2" patternUnits="userSpaceOnUse"><rect width="2" height="2" fill="#22609a"/><rect width="1" height="1" fill="#c6f2fc"/><rect x="1" y="1" width="1" height="1" fill="#c6f2fc"/></pattern></defs><rect width="12" height="532" fill="url(#hp)"/></svg><div class="a" style="left:317px;top:637px;width:12px;height:193px;background:#fafafa"></div><div class="a" style="left:329px;top:105px;width:40px;height:725px;background:#fff"></div><div class="a" style="left:370px;top:276px;width:1504px;height:19px;background:#e8f2fe"></div><div class="ln" style="left:316px;top:105px">94</div><div class="ln" style="left:316px;top:124px">95</div><div class="cl" style="left:370px;top:124px">  <span class="cm">/* USER CODE END SysInit */</span></div><div class="ln" style="left:316px;top:143px">96</div><div class="ln" style="left:316px;top:162px">97</div><div class="cl" style="left:370px;top:162px">  <span class="cm">/* Initialize all configured peripherals */</span></div><div class="ln" style="left:316px;top:181px">98</div><div class="cl" style="left:370px;top:181px">  <span class="cm">/* USER CODE BEGIN 2 */</span></div><div class="ln" style="left:316px;top:200px">99</div><div class="cl" style="left:370px;top:200px">  <span class="cm">/* Initialize the IO expander */</span></div><div class="ln" style="left:316px;top:219px">100</div><div class="cl" style="left:370px;top:219px"> <span class="cm">// BSP_IOEXPANDER_Init(0, IOEXPANDER_IO_MODE);</span></div><div class="ln" style="left:316px;top:238px">101</div><div class="ln" style="left:316px;top:257px">102</div><div class="cl" style="left:370px;top:257px">  <span class="cm">/* -1- Initialize LEDs mounted on STM32MP135C-DK board */</span></div><div class="ln" style="left:316px;top:276px">103</div><div class="cl" style="left:370px;top:276px">  <span class="fn">BSP_LED_Init</span>(<span class="en">LED_BLUE</span>);</div><div class="ln" style="left:316px;top:295px">104</div><div class="cl" style="left:370px;top:295px">  <span class="fn">BSP_LED_On</span>(<span class="en">LED_BLUE</span>);</div><div class="ln" style="left:316px;top:314px">105</div><div class="cl" style="left:370px;top:314px">  <span class="cm">/* -2- Configure EXTI14 (connected to PA.14 pin) in interrupt mode */</span></div><div class="ln" style="left:316px;top:333px">106</div><div class="cl" style="left:370px;top:333px">  EXTI14_IRQHandler_Config();</div><div class="ln" style="left:316px;top:352px">107</div><div class="ln" style="left:316px;top:371px">108</div><div class="cl" style="left:370px;top:371px">  <span class="cm">/* USER CODE END 2 */</span></div><div class="ln" style="left:316px;top:390px">109</div><div class="ln" style="left:316px;top:409px">110</div><div class="cl" style="left:370px;top:409px">  <span class="cm">/* Infinite loop */</span></div><div class="ln" style="left:316px;top:428px">111</div><div class="cl" style="left:370px;top:428px">  <span class="cm">/* USER CODE BEGIN WHILE */</span></div><div class="ln" style="left:316px;top:447px">112</div><div class="cl" style="left:370px;top:447px">  <span class="kw">while</span> (1)</div><div class="ln" style="left:316px;top:466px">113</div><div class="cl" style="left:370px;top:466px">  {</div><div class="ln" style="left:316px;top:485px">114</div><div class="cl" style="left:370px;top:485px">    <span class="cm">/* USER CODE END WHILE */</span></div><div class="ln" style="left:316px;top:504px">115</div><div class="cl" style="left:370px;top:504px">      <span class="fn">BSP_LED_Toggle</span>(<span class="en">LED_BLUE</span>);</div><div class="ln" style="left:316px;top:523px">116</div><div class="cl" style="left:370px;top:523px">      <span class="fn">HAL_Delay</span>(500);</div><div class="ln" style="left:316px;top:542px">117</div><div class="cl" style="left:370px;top:542px">    <span class="cm">/* USER CODE BEGIN 3 */</span></div><div class="ln" style="left:316px;top:561px">118</div><div class="ln" style="left:316px;top:580px">119</div><div class="cl" style="left:370px;top:580px">  }</div><div class="ln" style="left:316px;top:599px">120</div><div class="cl" style="left:370px;top:599px">  <span class="cm">/* USER CODE END 3 */</span></div><div class="ln" style="left:316px;top:618px">121</div><div class="cl" style="left:370px;top:618px">}</div><div class="ln" style="left:316px;top:637px">122</div><div class="ln" style="left:316px;top:656px">123</div><div class="cl" style="left:370px;top:656px"><span class="cm">/**</span></div><div class="ln" style="left:316px;top:675px">124</div><div class="cl" style="left:370px;top:675px"><span class="cm">  * @brief System Clock Configuration</span></div><div class="ln" style="left:316px;top:694px">125</div><div class="cl" style="left:370px;top:694px"><span class="cm">  * @retval None</span></div><div class="ln" style="left:316px;top:713px">126</div><div class="cl" style="left:370px;top:713px"><span class="cm">  */</span></div><div class="ln" style="left:316px;top:732px">127</div><div class="cl" style="left:370px;top:732px"><span class="kw">void</span> <span class="fb">SystemClock_Config</span>(<span class="kw">void</span>)</div><div class="ln" style="left:316px;top:751px">128</div><div class="cl" style="left:370px;top:751px">{</div><div class="ln" style="left:316px;top:770px">129</div><div class="cl" style="left:370px;top:770px"><span class="kw">#if</span> !defined(USE_DDR)</div><div class="ln" style="left:316px;top:789px">130</div><div class="cl" style="left:370px;top:789px">  <span class="fn">HAL_RCC_DeInit</span>();</div><div class="ln" style="left:316px;top:808px">131</div><div class="cl" style="left:370px;top:808px">  <span class="ty">RCC_ClkInitTypeDef</span> RCC_ClkInitStructure;</div><svg style="left:360px;top:660px;" width="10" height="10" viewBox="0 0 10 10"><circle cx="5" cy="5" r="4.2" fill="#e8eef8" stroke="#a0b0c8" stroke-width="0.9"/><path d="M2.8 5H7.2" stroke="#4a5a7a" stroke-width="1.1"/></svg><svg style="left:360px;top:736px;" width="10" height="10" viewBox="0 0 10 10"><circle cx="5" cy="5" r="4.2" fill="#e8eef8" stroke="#a0b0c8" stroke-width="0.9"/><path d="M2.8 5H7.2" stroke="#4a5a7a" stroke-width="1.1"/></svg><svg style="left:421px;top:710px;" width="60" height="3" viewBox="0 0 60 3"><path d="M0 2 L1 0 L3 2 L5 0 L7 2 L9 0 L11 2 L13 0 L15 2 L17 0 L19 2 L21 0 L23 2 L25 0 L27 2 L29 0 L31 2 L33 0 L35 2 L37 0 L39 2 L41 0 L43 2 L45 0 L47 2 L49 0 L51 2 L53 0 L55 2 L57 0 L59 2" fill="none" stroke="#e03030" stroke-width="0.8"/></svg><div class="a" style="left:401px;top:487px;width:516px;height:67px;border:3px solid #e31e1e;border-radius:3px"></div><div class="a" style="left:1876px;top:105px;width:14px;height:725px;background:#f0f0f0"></div><div class="a" style="left:1882px;top:316px;width:2px;height:80px;background:#6a6a6a;border-radius:1px"></div><div class="a" style="left:1890px;top:105px;width:14px;height:725px;background:#f7f7f7"></div><div class="a" style="left:317px;top:830px;width:52px;height:17px;background:#f7f7f7"></div><div class="a" style="left:369px;top:830px;width:1507px;height:17px;background:#f0f0f0"></div><svg style="left:373px;top:835px;" width="6" height="8" viewBox="0 0 6 8"><path d="M6 0V8L0 4Z" fill="#9a9a9a"/></svg><svg style="left:1862px;top:835px;" width="6" height="8" viewBox="0 0 6 8"><path d="M0 0V8L6 4Z" fill="#9a9a9a"/></svg><div class="a" style="left:1876px;top:830px;width:28px;height:17px;background:#f7f7f7"></div><div class="a" style="left:316px;top:852px;width:1589px;height:162px;background:#fff"></div><div class="a" style="left:316px;top:852px;width:1589px;height:1px;background:#d9d9d9"></div><div class="a" style="left:316px;top:852px;width:1px;height:161px;background:#d4d4d4"></div><div class="a" style="left:1904px;top:852px;width:1px;height:161px;background:#d4d4d4"></div><div class="a" style="left:316px;top:1012px;width:1589px;height:1px;background:#cfcfcf"></div><div class="a" style="left:317px;top:853px;width:1587px;height:24px;background:#ebebeb"></div><div class="a" style="left:463px;top:853px;width:95px;height:24px;background:#f5f5f5"></div><svg style="left:321px;top:858px;" width="16" height="16" viewBox="0 0 16 16"><rect x="2.5" y="0.5" width="9" height="14" fill="#fff" stroke="#8090a8"/><circle cx="5" cy="3.5" r="3" fill="#d42020"/><path d="M4 8L7.5 15H0.5Z" fill="#f5c518"/><path d="M10 2C12 4 12 10 10 14" stroke="#8090a8" fill="none"/></svg><div class="t" style="left:340px;top:859px;font-size:12.9px">Problems</div><svg style="left:405px;top:858px;" width="16" height="16" viewBox="0 0 16 16"><rect x="3.5" y="2.5" width="11" height="13" fill="#fff" stroke="#b09060"/><rect x="6" y="1" width="6" height="3" fill="#a0a0a0"/><path d="M1 9L3.5 12L8 6" stroke="#2a7ad8" stroke-width="2" fill="none"/><path d="M8 9h5M8 12h5" stroke="#7d8fb0"/></svg><div class="t" style="left:424px;top:859px;font-size:12.9px">Tasks</div><svg style="left:469px;top:858px;" width="16" height="16" viewBox="0 0 16 16"><rect x="0.75" y="1.75" width="13" height="10" fill="#fff" stroke="#2a5a9a" stroke-width="1.5"/><path d="M3 5h8M3 8h6" stroke="#2a5a9a"/><rect x="2" y="13" width="10" height="2" fill="#2a5a9a"/></svg><div class="t" style="left:487px;top:859px;font-size:12.9px">Console</div><svg style="left:541px;top:862px;" width="9" height="9" viewBox="0 0 9 9"><path d="M0.5 0.5L8.5 8.5M8.5 0.5L0.5 8.5" stroke="#1a1a1a" stroke-width="0.95"/></svg><svg style="left:565px;top:858px;" width="16" height="16" viewBox="0 0 16 16"><rect x="0.5" y="1.5" width="14" height="13" fill="#fff" stroke="#6a7a90"/><path d="M0.5 4.5H14.5M4.5 4.5V14.5M0.5 8H14.5M0.5 11.5H14.5" stroke="#a0b0c8"/></svg><div class="t" style="left:583px;top:859px;font-size:12.9px">Properties</div><svg style="left:1556px;top:857px;" width="16" height="16" viewBox="0 0 16 16"><rect x="1.5" y="2.5" width="12" height="12" fill="#c8c8c8" stroke="#a8a8a8"/></svg><svg style="left:1578px;top:857px;" width="16" height="16" viewBox="0 0 16 16"><path d="M2 3L14 14M14 3L2 14" stroke="#5a5a5a" stroke-width="3.5"/></svg><svg style="left:1601px;top:857px;" width="16" height="16" viewBox="0 0 16 16"><path d="M2 3L14 14M14 3L2 14" stroke="#6a6a6a" stroke-width="3"/><path d="M1 1L8 8M7 0L3 5" stroke="#8a8a8a" stroke-width="1.2"/></svg><div class="a" style="left:1623px;top:858px;width:1px;height:17px;background:#909090"></div><svg style="left:1632px;top:857px;" width="16" height="16" viewBox="0 0 16 16"><path d="M1.5 0.5H8L11.5 4V14.5H1.5Z" fill="#fff" stroke="#8090b0"/><path d="M3 5h6M3 7h6M3 9h5M3 11h4" stroke="#6a80b0"/><path d="M10 10L15 15M15 10L10 15" stroke="#707070" stroke-width="1.5"/></svg><svg style="left:1655px;top:857px;" width="16" height="16" viewBox="0 0 16 16"><rect x="6.5" y="0.5" width="9" height="14" fill="#fff" stroke="#7d8fb0"/><path d="M9 3h1M13 3h1M9 6h1M13 6h1M9 9h1M13 9h1" stroke="#5a6a8a" stroke-width="1.5"/><rect x="1" y="9" width="7" height="7" fill="#f5c518" stroke="#a08010" stroke-width="0.7"/><path d="M2.5 9V7A2 2 0 0 1 6.5 7V9" stroke="#808080" fill="none" stroke-width="1.2"/></svg><svg style="left:1679px;top:857px;" width="16" height="16" viewBox="0 0 16 16"><rect x="0.5" y="1.5" width="10" height="13" fill="#fff" stroke="#7d8fb0"/><path d="M2 4h7M2 6h7M2 8h5" stroke="#6a80b0"/><path d="M13 5V11H7M7 11L9.5 8.5M7 11L9.5 13.5" stroke="#e0a810" stroke-width="2" fill="none"/></svg><div class="a" style="left:1699px;top:854px;width:22px;height:21px;background:#cce4f7;border:1px solid #a8d0f0;border-radius:2px"></div><div class="a" style="left:1722px;top:854px;width:22px;height:21px;background:#cce4f7;border:1px solid #a8d0f0;border-radius:2px"></div><svg style="left:1702px;top:857px;" width="16" height="16" viewBox="0 0 16 16"><rect x="4.5" y="0.5" width="11" height="9" fill="#fff" stroke="#2a5a9a"/><path d="M6 3.5h7M6 6h5" stroke="#2a5a9a"/><rect x="0.5" y="5.5" width="7" height="6" fill="#fff" stroke="#2a5a9a"/><rect x="2" y="13" width="4" height="2" fill="#2a5a9a"/></svg><svg style="left:1725px;top:857px;" width="16" height="16" viewBox="0 0 16 16"><rect x="4.5" y="0.5" width="11" height="9" fill="#fff" stroke="#2a5a9a"/><path d="M7 2.5L10 6.5M10 2.5L7 6.5" stroke="#d02020" stroke-width="1.5"/><path d="M11.5 3.5h2M11.5 6h2" stroke="#2a5a9a"/><rect x="0.5" y="5.5" width="7" height="6" fill="#fff" stroke="#2a5a9a"/><rect x="2" y="13" width="4" height="2" fill="#2a5a9a"/></svg><div class="a" style="left:1746px;top:858px;width:1px;height:17px;background:#909090"></div><svg style="left:1755px;top:857px;" width="16" height="16" viewBox="0 0 16 16"><rect x="0.5" y="3.5" width="14" height="12" fill="#fff" stroke="#6a8ab0"/><rect x="0.5" y="3.5" width="14" height="2.5" fill="#7da2cf"/><path d="M7 11L13 4" stroke="#2a8a3a" stroke-width="2"/><circle cx="13" cy="3" r="2.5" fill="#3aa84a"/></svg><svg style="left:1779px;top:857px;" width="16" height="16" viewBox="0 0 16 16"><rect x="0.75" y="1.75" width="14" height="10" fill="#fff" stroke="#2a5a9a" stroke-width="1.5"/><path d="M3 5h8M3 8h6" stroke="#2a5a9a"/><rect x="3" y="13" width="10" height="2" fill="#2a5a9a"/></svg><svg style="left:1802px;top:863px;" width="8" height="5" viewBox="0 0 8 5"><path d="M0 0.5H8L4 4.5Z" fill="#1a1a1a"/></svg><svg style="left:1819px;top:857px;" width="16" height="16" viewBox="0 0 16 16"><rect x="1.5" y="3.5" width="12" height="11" fill="#fdfbf0" stroke="#6a8ab0"/><rect x="1.5" y="3.5" width="12" height="3" fill="#7da2cf"/><path d="M12 0L13.3 2.7L16 4L13.3 5.3L12 8L10.7 5.3L8 4L10.7 2.7Z" fill="#f2c027" stroke="#c08a10" stroke-width="0.5"/></svg><svg style="left:1842px;top:863px;" width="8" height="5" viewBox="0 0 8 5"><path d="M0 0.5H8L4 4.5Z" fill="#1a1a1a"/></svg><div class="a" style="left:1861px;top:860px;width:10px;height:5px;border:1.3px solid #000;background:#fff"></div><div class="a" style="left:1884px;top:860px;width:10px;height:10px;border:1.3px solid #000"></div><div class="a" style="left:1884px;top:862px;width:10px;height:1px;background:#000"></div><div class="a" style="left:317px;top:877px;width:1587px;height:19px;background:#f0f0f0"></div><div class="a" style="left:317px;top:895px;width:1587px;height:1px;background:#b8b8b8"></div><div class="t" style="left:319px;top:879px;font-size:12.92px">&lt;terminated&gt; MP13_BSP_BasicTemplates [STM32 C/C++ Application] ST-LINK (OpenOCD) (Terminated Mar 21, 2024, 4:38:50 PM) [pid: 41]</div><div class="cl" style="left:319px;top:897px;color:#d42424">Info : SWD DPIDR 0x6ba02477</div><div class="cl" style="left:319px;top:916px;color:#d42424">Info : STM32MP135FAFx.cpu: hardware has 6 breakpoints, 4 watchpoints</div><div class="cl" style="left:319px;top:935px;color:#d42424">Info : STM32MP135FAFx.cpu: MPIDR level2 0, cluster 0, core 0, multi core, no SMT</div><div class="cl" style="left:319px;top:954px;color:#d42424">Info : gdb port disabled</div><div class="cl" style="left:319px;top:973px;color:#d42424">Info : gdb port disabled</div><div class="a" style="left:317px;top:997px;width:1587px;height:15px;background:#f0f0f0"></div><svg style="left:320px;top:1001px;" width="6" height="8" viewBox="0 0 6 8"><path d="M6 0V8L0 4Z" fill="#9a9a9a"/></svg><div class="a" style="left:8px;top:1013px;width:1920px;height:27px;background:#f0f0f0"></div><div class="a" style="left:8px;top:1040px;width:1920px;height:8px;background:#f0f0f0"></div><div class="a" style="left:8px;top:1040px;width:1920px;height:1px;background:#e0e0e0"></div><div class="a" style="left:1046px;top:1014px;width:30px;height:23px;border:1px solid #c8c8c8;border-top:none;border-left:none;background:#f0f0f0"></div><svg style="left:1050px;top:1017px;" width="16" height="16" viewBox="0 0 16 16"><rect x="4.5" y="6.5" width="10" height="8" fill="#e8f0f8" stroke="#6a80a0"/><circle cx="5" cy="6" r="4" fill="#f5d060" stroke="#c09020" stroke-width="0.7"/></svg><div class="a" style="left:1079px;top:1017px;width:1px;height:20px;background:#c8c8c8"></div><div class="t" style="left:1087px;top:1017px;font-size:12.9px">Writable</div><div class="a" style="left:1213px;top:1017px;width:1px;height:20px;background:#c8c8c8"></div><div class="t" style="left:1221px;top:1017px;font-size:12.9px">Smart Insert</div><div class="a" style="left:1341px;top:1017px;width:1px;height:20px;background:#c8c8c8"></div><div class="t" style="left:1349px;top:1017px;font-size:12.9px">103 : 12 : 2982</div><svg style="left:1466px;top:1018px;" width="2" height="16" viewBox="0 0 2 16"><rect x="0" y="0" width="2" height="2" fill="#b8b8b8"/><rect x="0" y="4" width="2" height="2" fill="#b8b8b8"/><rect x="0" y="8" width="2" height="2" fill="#b8b8b8"/><rect x="0" y="12" width="2" height="2" fill="#b8b8b8"/></svg><div class="a" style="left:1905px;top:80px;width:23px;height:933px;background:#f0f0f0"></div><svg style="left:1909px;top:81px;" width="16" height="2" viewBox="0 0 16 2"><rect x="0" y="0" width="2" height="2" fill="#a0a0a0"/><rect x="4" y="0" width="2" height="2" fill="#a0a0a0"/><rect x="8" y="0" width="2" height="2" fill="#a0a0a0"/><rect x="12" y="0" width="2" height="2" fill="#a0a0a0"/></svg><svg style="left:1911px;top:89px;" width="12" height="12" viewBox="0 0 12 12"><rect x="0.5" y="4.5" width="8" height="6" fill="#fff" stroke="#907a6a"/><path d="M3.5 4.5V1.5H11.5V7.5H8.5" fill="none" stroke="#907a6a"/></svg><svg style="left:1909px;top:109px;" width="16" height="16" viewBox="0 0 16 16"><rect x="0.5" y="0.5" width="5" height="5" fill="#dbe8f8" stroke="#3a6ab0"/><rect x="0.5" y="10.5" width="5" height="5" fill="#dbe8f8" stroke="#3a6ab0"/><rect x="8.5" y="6.5" width="3" height="3" fill="#dbe8f8" stroke="#3a6ab0"/><path d="M7 3h6M12 8h3M7 13h6" stroke="#3a6ab0"/></svg><svg style="left:1909px;top:131px;" width="16" height="16" viewBox="0 0 16 16"><circle cx="8" cy="8" r="6.5" fill="none" stroke="#3aa050" stroke-width="1.3"/><circle cx="8" cy="8" r="3.5" fill="none" stroke="#3aa050" stroke-width="1.3"/><circle cx="8" cy="8" r="1.5" fill="#1a6a2a"/></svg><svg style="left:1909px;top:152px;" width="16" height="2" viewBox="0 0 16 2"><rect x="0" y="0" width="2" height="2" fill="#a0a0a0"/><rect x="4" y="0" width="2" height="2" fill="#a0a0a0"/><rect x="8" y="0" width="2" height="2" fill="#a0a0a0"/><rect x="12" y="0" width="2" height="2" fill="#a0a0a0"/></svg><svg style="left:1911px;top:160px;" width="12" height="12" viewBox="0 0 12 12"><rect x="0.5" y="4.5" width="8" height="6" fill="#fff" stroke="#907a6a"/><path d="M3.5 4.5V1.5H11.5V7.5H8.5" fill="none" stroke="#907a6a"/></svg><svg style="left:1909px;top:180px;" width="16" height="16" viewBox="0 0 16 16"><path d="M1.5 0.5H9L12.5 4V15.5H1.5Z" fill="#fff" stroke="#7d8fb0"/><text x="7" y="14" font-family="Liberation Sans" font-weight="bold" font-size="6.5" fill="#1a2a4a" text-anchor="middle">010</text></svg><svg style="left:1909px;top:202px;" width="16" height="16" viewBox="0 0 16 16"><rect x="0" y="13" width="14" height="2" fill="#1f3a6a"/><rect x="2" y="10" width="10" height="2" fill="#1f3a6a"/><rect x="4" y="7" width="8" height="2" fill="#7d9ac8"/><rect x="7" y="4" width="5" height="2" fill="#a8bcd8"/></svg><svg style="left:1908px;top:223px;" width="16" height="16" viewBox="0 0 16 16"><circle cx="8" cy="8" r="7" fill="none" stroke="#5a6070" stroke-width="1.2"/><circle cx="6.5" cy="10" r="2.5" fill="none" stroke="#5a6070" stroke-width="1.2"/><circle cx="10" cy="5.5" r="2" fill="none" stroke="#5a6070" stroke-width="1.2"/></svg><div class="a" style="left:1663px;top:905px;width:246px;height:121px;background:#fff;border:1px solid #c4c4c4;border-radius:6px 6px 0 0;box-shadow:0 0 14px rgba(0,0,0,0.16)"></div><div class="t" style="left:1664px;top:915px;font-weight:bold;font-size:13px">Updates Available</div><svg style="left:1892px;top:918px;" width="9" height="9" viewBox="0 0 9 9"><path d="M1 1L8 8M8 1L1 8" stroke="#000" stroke-width="1.6"/></svg><div class="a" style="left:1663px;top:935px;width:246px;height:1px;background:#b8b8b8"></div><div class="t" style="left:1669px;top:944px;font-size:13.3px">Updates are available for your software.</div><div class="t" style="left:1669px;top:961px;font-size:13.3px">Click to review and install updates.</div><div class="t" style="left:1669px;top:983px;font-size:13.3px">You will be reminded in 4 Hours.</div><div class="t" style="left:1669px;top:1000px;font-size:13.3px">Set reminder <span style="color:#1a6ad0">preferences</span></div><div class="a" style="left:1648px;top:1008px;width:280px;height:40px;background:#fff"></div><svg style="left:1652px;top:1006px;" width="48" height="42" viewBox="0 0 48 42"><circle cx="23" cy="27.8" r="18.4" fill="#0c3a94" transform="translate(0,-6)"/><path d="M3 9.5C15 8.5 21 14 26 21.6L42 36" stroke="#fff" stroke-width="4.2" fill="none"/><path d="M3 34C15 35 21 29.5 26 21.6L42 7" stroke="#fff" stroke-width="4.2" fill="none"/></svg><svg style="left:1700px;top:1014px;" width="222" height="17" viewBox="0 0 222 17"><g transform="translate(0.00,0)"><path d="M1.5 2.5L3 4M1 6.5L2.5 8M1 15L3.5 10.5 M5.5 3V1.5H15V3M8 3.5L6.5 6M12 3.5L14 6M5 8.5H15M10 6V15.5M10 9L5.5 14M10 9L15 14" fill="none" stroke="#656565" stroke-width="1.5" stroke-linecap="square" stroke-linejoin="miter"/></g><g transform="translate(16.90,0)"><path d="M3.5 2V12M0.5 6H6M0.5 13.5L6 11.5M8 2.5V9Q8 13 6.5 15M11 3V13M14.5 1.5V15.5" fill="none" stroke="#656565" stroke-width="1.5" stroke-linecap="square" stroke-linejoin="miter"/></g><g transform="translate(33.80,0)"><path d="M5 1V15Q5 15.5 6 15L13 13M12 1.5L6 6M0.5 8.5H15.5M8 9L15 15" fill="none" stroke="#656565" stroke-width="1.5" stroke-linecap="square" stroke-linejoin="miter"/></g><g transform="translate(50.70,0)"><path d="M6 1.5L1.5 3V9Q1.5 13 0.5 15M1.5 7H7M4.5 7V15.5M10 1L8.5 5M9 4H15L13.5 6.5M11.5 6.5Q11 12 8 15.5M11.5 10L15.5 15.5" fill="none" stroke="#656565" stroke-width="1.5" stroke-linecap="square" stroke-linejoin="miter"/></g><g transform="translate(67.60,0)"><path d="M8 0.5L6.5 2.5M2.5 3H13.5V15.5H2.5ZM2.5 7H13.5M2.5 11H13.5" fill="none" stroke="#656565" stroke-width="1.5" stroke-linecap="square" stroke-linejoin="miter"/></g><g transform="translate(84.50,0)"><path d="M1.5 2.5H7M0.5 6.5H8M4 6.5L1 13H7.5M6 10.5L8 13.5M9 5.5H15.5Q15.5 15 13.5 15.5M12 1V7Q12 13 8.5 15.5" fill="none" stroke="#656565" stroke-width="1.5" stroke-linecap="square" stroke-linejoin="miter"/></g><g transform="translate(101.40,0)"><path d="M5 1L1 7.5M3 5V15.5M8.5 1.5V13.5Q8.5 15.5 11 15.5H15.5V12.5M15 4L8.5 9.5" fill="none" stroke="#656565" stroke-width="1.5" stroke-linecap="square" stroke-linejoin="miter"/></g><g transform="translate(118.30,0)"><path d="M1.5 1.5L3 3M0.5 6H3V13.5L5 12M8 2V5Q8 8 6 8.5M8 2H12.5V6Q12.5 7.5 15 7M7 10H14Q12 14 6.5 15.5M8.5 11Q11 14.5 15.5 15.5" fill="none" stroke="#656565" stroke-width="1.5" stroke-linecap="square" stroke-linejoin="miter"/></g><g transform="translate(135.20,0)"><path d="M6 0.5Q4 3.5 1.5 5M5.5 2.5H12Q10 6 2 8M6 4Q10 7 15 7.5M3.5 9.5H12.5V15.5H3.5ZM8 9.5V15.5M3.5 12.5H12.5" fill="none" stroke="#656565" stroke-width="1.5" stroke-linecap="square" stroke-linejoin="miter"/></g><g transform="translate(152.10,0)"><path d="M0.5 4H15.5M7.5 0.5Q5 8 1.5 11M5.5 7.5H12.5V15.5H11M5.5 7.5V15.5M5.5 10.5H12.5M5.5 13H12.5" fill="none" stroke="#656565" stroke-width="1.5" stroke-linecap="square" stroke-linejoin="miter"/></g><g transform="translate(169.00,0)"><path d="M1.5 1.5V15.5M1.5 1.5H5L3.5 6Q6 9 3 12M7.5 2H13.5V9H7.5ZM7.5 5.5H13.5M7.5 2V15.5L11 13.5M10 9Q12 14 15.5 15.5M14.5 10L12.5 12" fill="none" stroke="#656565" stroke-width="1.5" stroke-linecap="square" stroke-linejoin="miter"/></g><g transform="translate(185.90,0)"><path d="M6 1.5Q4 6 0.5 8.5M10 1.5Q12 6 15.5 8.5M7.5 8Q5 12 2.5 14H13M10.5 11.5L14 15.5" fill="none" stroke="#656565" stroke-width="1.5" stroke-linecap="square" stroke-linejoin="miter"/></g><g transform="translate(202.80,0)"><path d="M1.5 2H14.5V14Q14.5 15.5 12.5 15.5M3 5.5H11M3.5 8.5H10V13H3.5ZM3.5 8.5V14" fill="none" stroke="#656565" stroke-width="1.5" stroke-linecap="square" stroke-linejoin="miter"/></g></svg><svg style="left:1699px;top:1032px;" width="222" height="10" viewBox="0 0 222 10"><text x="0" y="9" font-family="Liberation Sans" font-weight="bold" font-size="9.5" fill="#7a7a7a" textLength="220" lengthAdjust="spacingAndGlyphs">SHENZHEN CHANGXIN AUTOMATION EQUIPMENT CO. LTD</text></svg></body></html>
